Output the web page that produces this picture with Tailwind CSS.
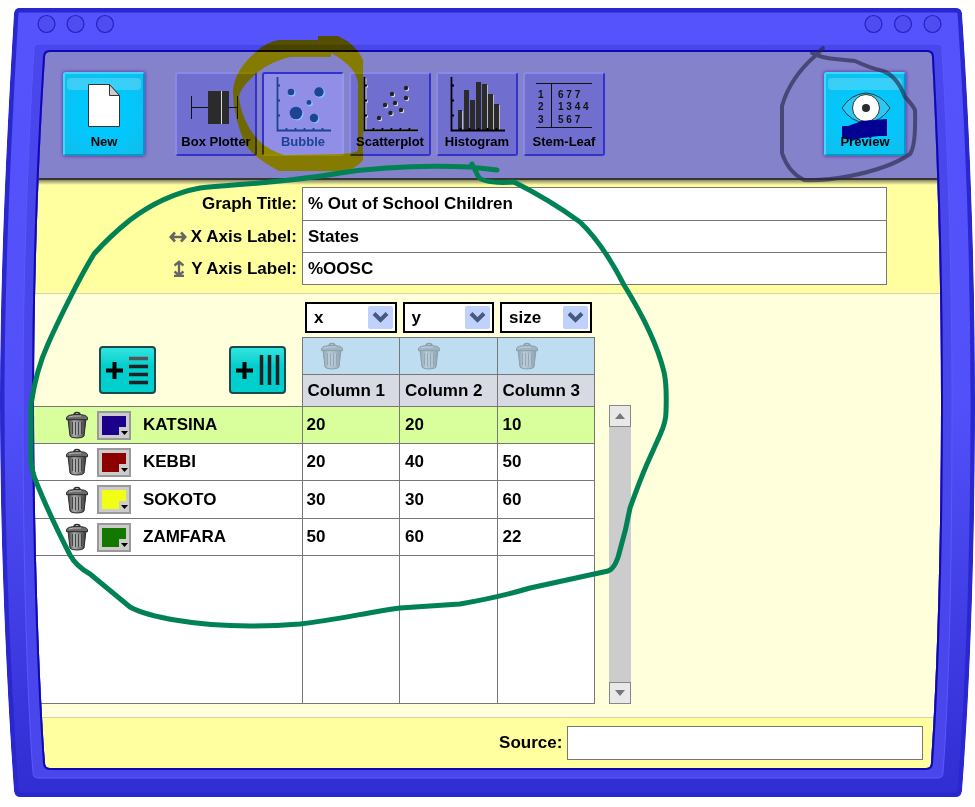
<!DOCTYPE html>
<html lang="en">
<head>
<meta charset="utf-8">
<title>Graph maker</title>
<meta name="viewport" content="width=device-width, initial-scale=1">
<script src="https://cdn.jsdelivr.net/npm/@tailwindcss/browser@4"></script>
</head>
<body class="bg-white">
<svg class="absolute h-0 w-0" aria-hidden="true">
  <defs>
    <linearGradient id="metal" x1="0" x2="1"><stop offset="0" stop-color="#444"/><stop offset=".35" stop-color="#aaa"/><stop offset=".7" stop-color="#777"/><stop offset="1" stop-color="#333"/></linearGradient>
    <symbol id="trash" viewBox="0 0 24 28">
      <path d="M3 8h18l-2 17q-1 2-7 2t-7-2z" fill="url(#metal)" stroke="#2b2b2b"/>
      <path d="M7.500 11v12M10.500 11v13M13.500 11v13M16.500 11v12" stroke="#444" stroke-width="1.200"/>
      <path d="M9 11v13M12 11v13M15 11v13" stroke="#bbb" stroke-width="1.100"/>
      <path d="M9 4q0-2.500 3-2.500t3 2.500" fill="none" stroke="#2b2b2b" stroke-width="1.500"/>
      <path d="M1.500 6.500q1-3 10.500-3t10.500 3v2.200h-21z" fill="#6b6b6b" stroke="#2b2b2b"/>
      <path d="M4 6q3-1.300 12-1" fill="none" stroke="#bbb"/>
    </symbol>
    <symbol id="axes" viewBox="0 0 56 56">
      <path d="M2.500 1v53.500H56M3 9.500h2M3 24.500h2M3 39.500h2M11.500 54v-2M20.500 54v-2M29.500 54v-2M38.500 54v-2M47.500 54v-2" fill="none" stroke="currentColor" stroke-width="1.800"/>
    </symbol>
  </defs>
</svg>

<div class="relative flex min-h-screen flex-col px-[34px] pt-[52px] pb-[39px] font-['Liberation_Sans',sans-serif] text-[17px] leading-6 font-bold text-black">

  <header class="flex h-[128px] shrink-0 items-start border-b-2 border-[#38362e] bg-[#8482cb] pt-5 pr-[35px] pl-[29px] text-[13px] leading-4">
    <button class="relative flex h-[84px] w-[82px] flex-col items-center justify-end rounded-[3px] border-2 border-t-[#38d8ff] border-r-[#0792d2] border-b-[#0799bd] border-l-[#37dcff] bg-[radial-gradient(#00c8ff_40%,#12bdea)] pb-1 shadow-[0_0_3px_1px_#7048b0]">
      <span class="absolute inset-x-0.5 top-1 h-3 rounded bg-white/20"></span>
      <svg class="relative mb-1.5 h-11 w-8" viewBox="0 0 32 44"><path d="M.5.500h21l10 11v31H.5z" fill="#fff" stroke="#333"/><path d="M21.500.500v11h10z" fill="#ccc" stroke="#333"/></svg>
      <span class="relative">New</span>
    </button>
    <nav class="ml-[30px] flex gap-[5px]" aria-label="Graph type">
      <button class="flex h-[84px] w-[82px] flex-col items-center justify-end rounded-[3px] border-2 border-t-[#8b89e8] border-r-[#3432cd] border-b-[#3432cd] border-l-[#8b89e8] bg-[#706ece] pb-1 whitespace-nowrap">
        <svg class="mb-0.5 h-14 w-[56px]" viewBox="0 0 56 56"><path d="M3.500 20v23M3.500 31.500h17M41 31.500h9M49.500 20v23" stroke="#111" fill="none"/><path d="M20 15h21v33H20z" fill="#2b2b2b"/><path d="M33.500 15v33" stroke="#ddd"/></svg>
        <span>Box Plotter</span>
      </button>
      <button aria-pressed="true" class="flex h-[84px] w-[82px] flex-col items-center justify-end rounded-[3px] border-2 border-t-[#3432cd] border-r-[#9795ee] border-b-[#9795ee] border-l-[#3432cd] bg-[#908ee6] pb-1 text-[#1c4394]">
        <svg class="mb-0.5 h-14 w-[56px]" viewBox="0 0 56 56"><use href="#axes"/><g fill="#8cc4ff"><circle cx="17" cy="17" r="3.500"/><circle cx="45" cy="17" r="5"/><circle cx="35" cy="27.500" r="2.800"/><circle cx="22" cy="38" r="6.500"/><circle cx="40" cy="43" r="4.300"/></g><g fill="#1c4394"><circle cx="16" cy="16" r="3.300"/><circle cx="44" cy="16" r="4.700"/><circle cx="34" cy="26.500" r="2.400"/><circle cx="21" cy="37" r="6.300"/><circle cx="39" cy="42" r="4.200"/></g></svg>
        <span>Bubble</span>
      </button>
      <button class="flex h-[84px] w-[82px] flex-col items-center justify-end rounded-[3px] border-2 border-t-[#8b89e8] border-r-[#3432cd] border-b-[#3432cd] border-l-[#8b89e8] bg-[#706ece] pb-1">
        <svg class="mb-0.5 h-14 w-[56px]" viewBox="0 0 56 56"><g color="#ddd"><use href="#axes" x="1" y="1"/></g><use href="#axes"/><g fill="#ddd"><circle cx="18" cy="43" r="2.200"/><circle cx="24" cy="30" r="2.200"/><circle cx="29.500" cy="38" r="2.200"/><circle cx="34" cy="28" r="2.200"/><circle cx="31" cy="19" r="2.200"/><circle cx="40" cy="35" r="2.200"/><circle cx="45" cy="23" r="2.200"/><circle cx="45" cy="13" r="2.200"/></g><g fill="#222"><circle cx="17" cy="42" r="2.200"/><circle cx="23" cy="29" r="2.200"/><circle cx="28.500" cy="37" r="2.200"/><circle cx="33" cy="27" r="2.200"/><circle cx="30" cy="18" r="2.200"/><circle cx="39" cy="34" r="2.200"/><circle cx="44" cy="22" r="2.200"/><circle cx="44" cy="12" r="2.200"/></g></svg>
        <span>Scatterplot</span>
      </button>
      <button class="flex h-[84px] w-[82px] flex-col items-center justify-end rounded-[3px] border-2 border-t-[#8b89e8] border-r-[#3432cd] border-b-[#3432cd] border-l-[#8b89e8] bg-[#706ece] pb-1">
        <svg class="mb-0.5 h-14 w-[56px]" viewBox="0 0 56 56"><path d="M10 54V35h4v19zm6 0V15h4v39zm6 0V25h4v29zm6 0V7h4v47zm6 0V9h5v45zm6 0V19h5v35zm7 0V29h4v25z" fill="#bbb"/><path d="M9 54V34h4v20zm6 0V14h5v40zm6 0V24h5v30zm6 0V6h5v48zm6 0V8h5v46zm6 0V18h5v36zm6 0V28h5v26z" fill="#2b2b2b"/><use href="#axes"/></svg>
        <span>Histogram</span>
      </button>
      <button class="flex h-[84px] w-[82px] flex-col items-center justify-end rounded-[3px] border-2 border-t-[#8b89e8] border-r-[#3432cd] border-b-[#3432cd] border-l-[#8b89e8] bg-[#706ece] pb-1">
        <svg class="mb-1 h-[48px] w-[58px]" viewBox="0 0 58 48"><path d="M1 1.500h56M1 45.500h56M16.500 1v45" stroke="#111" fill="none"/><g font-family="Liberation Sans, sans-serif" font-size="10" font-weight="700" fill="#111"><text x="3" y="16">1</text><text x="3" y="28">2</text><text x="3" y="41">3</text><text x="23" y="16">6 7 7</text><text x="23" y="28">1 3 4 4</text><text x="23" y="41">5 6 7</text></g></svg>
        <span>Stem-Leaf</span>
      </button>
    </nav>
    <button class="relative ml-auto flex h-[84px] w-[82px] flex-col items-center justify-end rounded-[3px] border-2 border-t-[#38d8ff] border-r-[#0792d2] border-b-[#0799bd] border-l-[#37dcff] bg-[radial-gradient(#00c8ff_40%,#12bdea)] pb-1 shadow-[0_0_3px_1px_#7048b0]">
      <span class="absolute inset-x-0.5 top-1 h-3 rounded bg-white/20"></span>
      <svg class="absolute top-4 left-[15px] h-[50px] w-[50px]" viewBox="0 0 50 50"><path d="M1 18Q10 4 25 3q15 1 24 15Q40 32 25 33Q10 32 1 18z" fill="#29c9f5" stroke="#333"/><circle cx="25" cy="18" r="13.500" fill="#fff" stroke="#333"/><circle cx="25" cy="18" r="4" fill="#2b2b2b"/><path d="M1 36h6l14-5 25-2v17h-8l-17 2-8 2-12-2z" fill="#000092"/></svg>
      <span class="relative">Preview</span>
    </button>
  </header>

  <section class="shrink-0 border-b border-[#d4d4b4] bg-[linear-gradient(#8a8868,#ffffa0_5px)] pt-[7px] pr-[54px] pb-2">
    <div class="flex">
      <label for="title" class="flex h-[33px] w-[268px] shrink-0 items-center justify-end pr-[5px]">Graph Title:</label>
      <input id="title" value="% Out of School Children" class="h-[34px] min-w-0 flex-1 border border-[#777] bg-white px-[5px] outline-none">
    </div>
    <div class="-mt-px flex">
      <label for="xl" class="flex h-[33px] w-[268px] shrink-0 items-center justify-end gap-1 pr-[5px]"><svg class="h-3 w-[18px]" viewBox="0 0 18 12"><path d="M2 6h14M6 1.500L1.800 6 6 10.500M12 1.500L16.200 6 12 10.500" fill="none" stroke="#666" stroke-width="2.600"/></svg>X Axis Label:</label>
      <input id="xl" value="States" class="h-[33px] min-w-0 flex-1 border border-[#777] bg-white px-[5px] outline-none">
    </div>
    <div class="-mt-px flex">
      <label for="yl" class="flex h-[33px] w-[268px] shrink-0 items-center justify-end gap-1.5 pr-[5px]"><svg class="h-[17px] w-3" viewBox="0 0 12 17"><path d="M6 2v13M1.500 5.500L6 1.800l4.500 3.700M1.500 11.500L6 15.200l4.500-3.700M1 16h10" fill="none" stroke="#666" stroke-width="2.300"/></svg>Y Axis Label:</label>
      <input id="yl" value="%OOSC" class="h-[33px] min-w-0 flex-1 border border-[#777] bg-white px-[5px] outline-none">
    </div>
  </section>

  <main class="flex flex-1 items-end gap-[14px] bg-[#ffffdc] pb-[13px]">
    <table class="w-[561px] table-fixed border-collapse self-end text-left">
      <colgroup><col class="w-[268px]"><col><col><col></colgroup>
      <thead>
        <tr class="h-[43px]">
          <td rowspan="3" class="align-bottom">
            <div class="flex justify-end gap-[73px] pr-4 pb-3">
              <button aria-label="Add row" class="h-[48px] w-[57px] rounded-[4px] border-2 border-[#1d4a48] bg-linear-to-b from-[#2ee4e0] to-[#00cfcd] to-40%"><svg class="h-full w-full" viewBox="0 0 53 44"><path d="M5 22.500h17M13.500 14v17" stroke="#000" stroke-width="4"/><path d="M28 10.500h19" stroke="#555" stroke-width="3.500"/><path d="M28 18.500h19M28 26.500h19M28 34.500h19" stroke="#222" stroke-width="3.500"/></svg></button>
              <button aria-label="Add column" class="h-[48px] w-[57px] rounded-[4px] border-2 border-[#1d4a48] bg-linear-to-b from-[#2ee4e0] to-[#00cfcd] to-40%"><svg class="h-full w-full" viewBox="0 0 53 44"><path d="M5 22.500h17M13.500 14v17" stroke="#000" stroke-width="4"/><path d="M30.500 7v30M38.500 7v30M46.500 7v30" stroke="#222" stroke-width="3.500"/></svg></button>
            </div>
          </td>
          <td class="px-[3px] pt-1"><div class="relative"><select aria-label="Column 1 role" class="h-[31px] w-full appearance-none border-2 border-black bg-white pl-[7px] outline-none"><option>x</option></select><svg class="pointer-events-none absolute top-1 right-1 h-[23px] w-[25px]" viewBox="0 0 25 23"><rect width="25" height="23" rx="2" fill="#c0d2fb"/><path d="M6 7.500l6.500 6.500L19 7.500" fill="none" stroke="#46597f" stroke-width="4"/></svg></div></td>
          <td class="px-[3px] pt-1"><div class="relative"><select aria-label="Column 2 role" class="h-[31px] w-full appearance-none border-2 border-black bg-white pl-[7px] outline-none"><option>y</option></select><svg class="pointer-events-none absolute top-1 right-1 h-[23px] w-[25px]" viewBox="0 0 25 23"><rect width="25" height="23" rx="2" fill="#c0d2fb"/><path d="M6 7.500l6.500 6.500L19 7.500" fill="none" stroke="#46597f" stroke-width="4"/></svg></div></td>
          <td class="px-[3px] pt-1"><div class="relative"><select aria-label="Column 3 role" class="h-[31px] w-full appearance-none border-2 border-black bg-white pl-[7px] outline-none"><option>size</option></select><svg class="pointer-events-none absolute top-1 right-1 h-[23px] w-[25px]" viewBox="0 0 25 23"><rect width="25" height="23" rx="2" fill="#c0d2fb"/><path d="M6 7.500l6.500 6.500L19 7.500" fill="none" stroke="#46597f" stroke-width="4"/></svg></div></td>
        </tr>
        <tr class="h-[37px]">
          <td class="border border-[#777] bg-[#bfddf1] pl-[17px]"><button aria-label="Delete column 1" class="block opacity-35"><svg class="h-7 w-6"><use href="#trash"/></svg></button></td>
          <td class="border border-[#777] bg-[#bfddf1] pl-[17px]"><button aria-label="Delete column 2" class="block opacity-35"><svg class="h-7 w-6"><use href="#trash"/></svg></button></td>
          <td class="border border-[#777] bg-[#bfddf1] pl-[17px]"><button aria-label="Delete column 3" class="block opacity-35"><svg class="h-7 w-6"><use href="#trash"/></svg></button></td>
        </tr>
        <tr class="h-[32px] whitespace-nowrap">
          <th class="border border-[#777] bg-[#d7dae3] pl-[5px]">Column 1</th>
          <th class="border border-[#777] bg-[#d7dae3] pl-[5px]">Column 2</th>
          <th class="border border-[#777] bg-[#d7dae3] pl-[5px]">Column 3</th>
        </tr>
      </thead>
      <tbody class="bg-white">
        <tr class="h-[37px] bg-[#d8ff9b]">
          <th class="border-y border-[#777]"><div class="flex items-center pl-[31px]"><button aria-label="Delete KATSINA"><svg class="h-7 w-6"><use href="#trash"/></svg></button><button aria-label="Colour" class="ml-2 h-[29px] w-[34px] border-2 border-[#999] bg-[#ccc]"><svg class="h-full w-full" viewBox="0 0 30 25"><path d="M3 3h24v11h-7v8H3z" fill="#1c008c"/><path d="M22 18h7l-3.500 4z"/></svg></button><span class="ml-3">KATSINA</span></div></th>
          <td class="border border-[#777] pl-1">20</td><td class="border border-[#777] pl-[5px]">20</td><td class="border border-[#777] pl-[5px]">10</td>
        </tr>
        <tr class="h-[37px]">
          <th class="border-y border-[#777]"><div class="flex items-center pl-[31px]"><button aria-label="Delete KEBBI"><svg class="h-7 w-6"><use href="#trash"/></svg></button><button aria-label="Colour" class="ml-2 h-[29px] w-[34px] border-2 border-[#999] bg-[#ccc]"><svg class="h-full w-full" viewBox="0 0 30 25"><path d="M3 3h24v11h-7v8H3z" fill="#8c0000"/><path d="M22 18h7l-3.500 4z"/></svg></button><span class="ml-3">KEBBI</span></div></th>
          <td class="border border-[#777] pl-1">20</td><td class="border border-[#777] pl-[5px]">40</td><td class="border border-[#777] pl-[5px]">50</td>
        </tr>
        <tr class="h-[38px]">
          <th class="border-y border-[#777]"><div class="flex items-center pl-[31px]"><button aria-label="Delete SOKOTO"><svg class="h-7 w-6"><use href="#trash"/></svg></button><button aria-label="Colour" class="ml-2 h-[29px] w-[34px] border-2 border-[#999] bg-[#ccc]"><svg class="h-full w-full" viewBox="0 0 30 25"><path d="M3 3h24v11h-7v8H3z" fill="#f0ff14"/><path d="M22 18h7l-3.500 4z"/></svg></button><span class="ml-3">SOKOTO</span></div></th>
          <td class="border border-[#777] pl-1">30</td><td class="border border-[#777] pl-[5px]">30</td><td class="border border-[#777] pl-[5px]">60</td>
        </tr>
        <tr class="h-[37px]">
          <th class="border-y border-[#777]"><div class="flex items-center pl-[31px]"><button aria-label="Delete ZAMFARA"><svg class="h-7 w-6"><use href="#trash"/></svg></button><button aria-label="Colour" class="ml-2 h-[29px] w-[34px] border-2 border-[#999] bg-[#ccc]"><svg class="h-full w-full" viewBox="0 0 30 25"><path d="M3 3h24v11h-7v8H3z" fill="#147800"/><path d="M22 18h7l-3.500 4z"/></svg></button><span class="ml-3">ZAMFARA</span></div></th>
          <td class="border border-[#777] pl-1">50</td><td class="border border-[#777] pl-[5px]">60</td><td class="border border-[#777] pl-[5px]">22</td>
        </tr>
        <tr class="h-[148px]">
          <td class="border-y border-[#777]"></td><td class="border border-[#777]"></td><td class="border border-[#777]"></td><td class="border border-[#777]"></td>
        </tr>
      </tbody>
    </table>
    <div class="flex h-[299px] w-[22px] flex-col justify-between bg-[#ccc]">
      <button aria-label="Scroll up" class="flex h-[22px] items-center justify-center border border-[#888] bg-[#e8e8e8]"><svg class="h-1.5 w-2.5" viewBox="0 0 10 6"><path d="M0 6l5-6 5 6z" fill="#777"/></svg></button>
      <button aria-label="Scroll down" class="flex h-[22px] items-center justify-center border border-[#888] bg-[#e8e8e8]"><svg class="h-1.5 w-2.5" viewBox="0 0 10 6"><path d="M0 0l5 6 5-6z" fill="#777"/></svg></button>
    </div>
  </main>

  <footer class="flex h-[51px] shrink-0 items-center justify-end gap-[5px] border-t border-[#d4d4b4] bg-[#ffffa0] pr-[18px]">
    <label for="source">Source:</label>
    <input id="source" class="h-[34px] w-2/5 border border-[#777] bg-white px-[5px] outline-none">
  </footer>

  <!-- window frame -->
  <svg class="pointer-events-none absolute inset-0 h-full w-full" viewBox="0 0 975 807" preserveAspectRatio="none" aria-hidden="true">
    <defs>
      <linearGradient id="shell" x1="0" y1="0" x2="0" y2="1"><stop offset="0" stop-color="#5553fc"/><stop offset=".5" stop-color="#5250f8"/><stop offset="1" stop-color="#2f2dd2"/></linearGradient>
      <clipPath id="outer"><path id="o" d="M19 8H956Q961 8 962 13C970 130 975 270 975 400C975 550 970 690 962 791Q961 797 956 797H20Q15 797 14 791C7 690 0 550 0 400C0 270 7 130 14 13Q15 8 19 8Z"/></clipPath>
      <clipPath id="ring"><path clip-rule="evenodd" d="M0 0H975V807H0ZM50 52H927Q932 52 932 57C937 150 941 270 941 400C941 540 937 680 931 763Q931 768 926 768H50Q45 768 45 763C39 680 34 540 34 400C34 270 39 150 45 57Q45 52 50 52Z"/></clipPath>
    </defs>
    <g clip-path="url(#ring)">
      <g clip-path="url(#outer)">
        <rect width="975" height="807" fill="url(#shell)"/>
        <use href="#o" fill="none" stroke="#2927cd" stroke-width="9"/>
        <path d="M39 44H937Q942 44 942 49C948 150 952 270 952 400C952 540 950 680 943 773Q943 778 938 778H38Q33 778 33 773C26 680 23 540 23 400C23 270 28 150 34 49Q34 44 39 44Z" fill="#4946ec" stroke="#5a58ff"/>
        <path d="M50 52H927Q932 52 932 57C937 150 941 270 941 400C941 540 937 680 931 763Q931 768 926 768H50Q45 768 45 763C39 680 34 540 34 400C34 270 39 150 45 57Q45 52 50 52Z" fill="none" stroke="#1008b0" stroke-width="4"/>
      </g>
    </g>
    <path fill="#fff" fill-rule="evenodd" d="M0 0H975V807H0ZM19 8H956Q961 8 962 13C970 130 975 270 975 400C975 550 970 690 962 791Q961 797 956 797H20Q15 797 14 791C7 690 0 550 0 400C0 270 7 130 14 13Q15 8 19 8Z"/>
    <g fill="#4f4df2" stroke="#2422c4" stroke-width="1.200"><circle cx="46.500" cy="24" r="8.500"/><circle cx="75.500" cy="24" r="8.500"/><circle cx="105" cy="24" r="8.500"/><circle cx="873.500" cy="24" r="8.500"/><circle cx="903" cy="24" r="8.500"/><circle cx="932.500" cy="24" r="8.500"/></g>
  </svg>

  <!-- pen annotations -->
  <svg class="pointer-events-none absolute top-0 left-0 h-[807px] w-[975px] mix-blend-multiply" viewBox="0 0 975 807" aria-hidden="true">
    <path fill="#fff200" fill-rule="evenodd" d="M318 36H338Q356 44 363 60V160Q356 170 340 171H279Q254 158 245 144Q233 115 233 92Q234 70 256 52Q266 42 279 40H318ZM290 57Q270 62 258 72Q239 88 239 98Q242 122 258 140Q268 150 284 155L340 154Q358 153 358 150V84Q357 67 331 53V57Z"/>
  </svg>
  <svg class="pointer-events-none absolute top-0 left-0 h-[807px] w-[975px]" viewBox="0 0 975 807" fill="none" stroke-linecap="round" stroke-linejoin="round" aria-hidden="true">
    <path stroke="#008254" stroke-width="5" d="M497 170L470 167Q400 164 340 173C290 182 240 184 200 188Q163 195 130 220Q110 236 94 254C78 280 55 328 48 344Q36 370 31 405V458Q31 470 37 484Q50 516 70 555Q76 566 90 574L130 607Q145 615 175 620C215 627 260 627 300 624C335 620 370 612 400 608L460 604Q500 597 530 588L608 571Q616 568 620 550Q626 530 630 508Q640 480 647 464L660 435Q666 422 666 412Q667 385 664 372Q655 335 624 285Q603 244 580 222Q550 200 514 182Q482 184 478 176L472 164"/>
    <path stroke="#28284a" stroke-opacity=".65" stroke-width="4" d="M823 48L815 56Q790 78 782 106V153Q788 172 804 180Q825 181 850 176Q890 168 910 154Q916 146 915 110Q912 104 905 97Q897 76 883 71Q870 68 855 61L835 59Q822 58 812 53"/>
  </svg>
</div>
</body>
</html>
